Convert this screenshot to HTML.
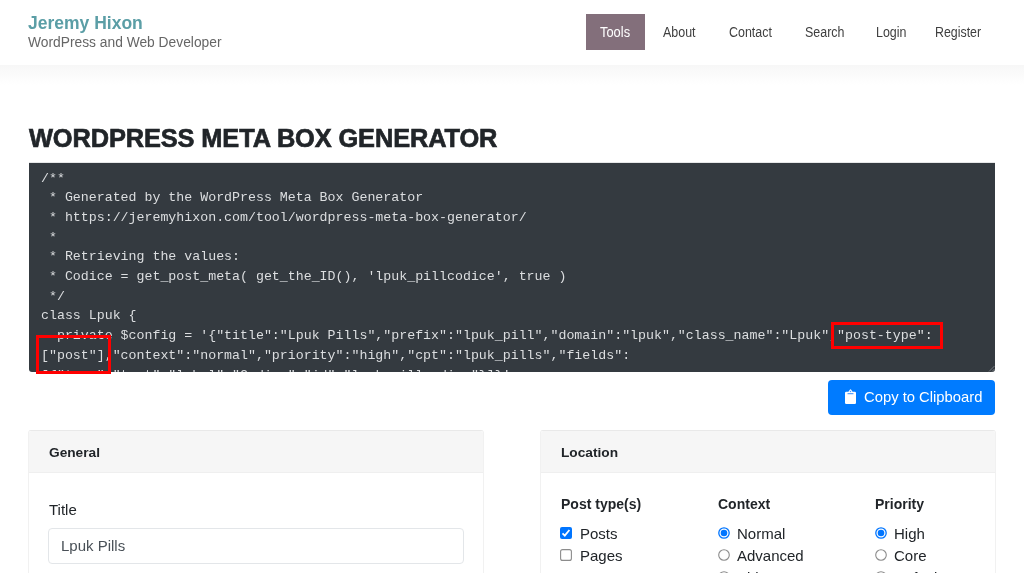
<!DOCTYPE html>
<html><head><meta charset="utf-8">
<style>
html,body{will-change:transform;margin:0;padding:0;background:#fff;width:1024px;height:573px;overflow:hidden;position:relative;font-family:"Liberation Sans",sans-serif;}
.a{position:absolute;white-space:nowrap;}
#hdr{left:0;top:0;width:1024px;height:65px;background:#fff;}
#shade{left:0;top:65px;width:1024px;height:20px;background:linear-gradient(#f7f7f7,#fff);}
#name{left:28px;top:12px;font-size:17.5px;font-weight:bold;color:#5b9ea6;line-height:22px;}
#tag{left:28px;top:34px;font-size:13.8px;color:#666;line-height:18px;}
#tools{left:586px;top:14px;width:59px;height:36px;background:#836f7b;}
.nav{font-size:14px;color:#3f3f3f;line-height:16px;top:24px;transform-origin:0 0;}
h1{position:absolute;margin:0;left:29px;top:120.5px;font-size:25.4px;-webkit-text-stroke:0.65px #212529;letter-spacing:-0.12px;font-weight:bold;color:#212529;line-height:34px;white-space:nowrap;}
#code{left:29px;top:162px;width:966px;height:209px;background:#343a40;border-top:1px solid #e6e7e8;border-radius:0 0 3px 3px;overflow:hidden;}
#code pre{margin:0;position:absolute;left:12px;top:5.5px;font-family:"Liberation Mono",monospace;font-size:13.27px;line-height:19.7px;color:#dcdee0;}
.red{position:absolute;border:3px solid #f00;box-sizing:border-box;}
#btn{left:828px;top:380px;width:167px;height:35px;background:#007bff;border-radius:4px;}
#btntxt{left:864px;top:389px;font-size:14.8px;color:#fff;line-height:17px;}
.card{position:absolute;top:430px;height:160px;border:1px solid #f1f1f1;border-top-color:#e9e9e9;border-radius:3px;background:#fff;box-sizing:border-box;}
.chdr{position:absolute;left:0;top:0;right:0;height:41px;background:#f6f6f6;border-bottom:1px solid #efefef;border-radius:3px 3px 0 0;}
.ctitle{font-size:13.7px;font-weight:bold;color:#212529;line-height:16px;}
.lbl{font-size:15px;color:#212529;line-height:18px;}
.bold{font-weight:bold;font-size:14px;}
#inp{left:48px;top:528px;width:416px;height:36px;box-sizing:border-box;border:1px solid #e3e6e9;border-radius:4px;background:#fff;}
.cb{position:absolute;width:11px;height:11px;box-sizing:border-box;border:1px solid #767676;border-radius:2px;background:#fff;}
.cb.on{background:#0075ff;border-color:#0075ff;}
.rd{position:absolute;width:11px;height:11px;box-sizing:border-box;border:1px solid #767676;border-radius:50%;background:#fff;}
.rd.on{border:2px solid #0075ff;}
.rd.on::after{content:"";position:absolute;left:1px;top:1px;width:5px;height:5px;border-radius:50%;background:#0075ff;}
</style></head><body>
<div class="a" id="hdr"></div>
<div class="a" id="shade"></div>
<div class="a" id="name">Jeremy Hixon</div>
<div class="a" id="tag">WordPress and Web Developer</div>
<div class="a" id="tools"></div>
<div class="a nav" style="left:600px;color:#fff;transform:scaleX(.92)">Tools</div>
<div class="a nav" style="left:663px;transform:scaleX(.89)">About</div>
<div class="a nav" style="left:729px;transform:scaleX(.89)">Contact</div>
<div class="a nav" style="left:805px;transform:scaleX(.89)">Search</div>
<div class="a nav" style="left:876px;transform:scaleX(.89)">Login</div>
<div class="a nav" style="left:935px;transform:scaleX(.885)">Register</div>

<h1>WORDPRESS META BOX GENERATOR</h1>

<div class="a" id="code"><pre>/**
 * Generated by the WordPress Meta Box Generator
 * https://jeremyhixon.com/tool/wordpress-meta-box-generator/
 *
 * Retrieving the values:
 * Codice = get_post_meta( get_the_ID(), 'lpuk_pillcodice', true )
 */
class Lpuk {
  private $config = '{"title":"Lpuk Pills","prefix":"lpuk_pill","domain":"lpuk","class_name":"Lpuk","post-type":
["post"],"context":"normal","priority":"high","cpt":"lpuk_pills","fields":
[{"type":"text","label":"Codice","id":"lpuk_pillcodice"}]}';</pre></div>
<svg class="a" style="left:988px;top:365px" width="7" height="7" viewBox="0 0 7 7"><path d="M6.5 1L1 6.5M6.5 4L4 6.5" stroke="#7d8288" stroke-width="0.9"/></svg>
<div class="red" style="left:831px;top:322px;width:112px;height:27px;"></div>
<div class="red" style="left:36px;top:335px;width:75px;height:39px;"></div>

<div class="a" id="btn"></div>
<svg class="a" style="left:845px;top:389px" width="11" height="15" viewBox="0 0 11 15"><rect x="0" y="2.8" width="11" height="12.2" rx="1.2" fill="#fff"/><path d="M3.2 3.2L4.6 0.9Q5.5 -0.2 6.4 0.9L7.8 3.2Z" fill="#fff"/><circle cx="5.5" cy="2.4" r="0.75" fill="#4d9bff"/><rect x="2.4" y="4" width="6.2" height="1.3" rx="0.65" fill="#5aa2ff"/></svg>
<div class="a" id="btntxt">Copy to Clipboard</div>

<div class="card" style="left:28px;width:456px;"><div class="chdr"></div></div>
<div class="card" style="left:540px;width:456px;"><div class="chdr"></div></div>
<div class="a ctitle" style="left:49px;top:445px;">General</div>
<div class="a ctitle" style="left:561px;top:445px;">Location</div>
<div class="a lbl" style="left:49px;top:501px;">Title</div>
<div class="a" id="inp"></div>
<div class="a lbl" style="left:61px;top:537px;color:#495057;">Lpuk Pills</div>

<div class="a lbl bold" style="left:561px;top:495px;">Post type(s)</div>
<div class="a lbl bold" style="left:718px;top:495px;">Context</div>
<div class="a lbl bold" style="left:875px;top:495px;">Priority</div>

<svg class="a" style="left:560px;top:527px" width="12" height="12" viewBox="0 0 12 12"><rect x="0" y="0" width="12" height="12" rx="2" fill="#0075ff"/><path d="M2.5 6.3L4.8 8.6L9.4 3" stroke="#fff" stroke-width="1.8" fill="none"/></svg>
<div class="a lbl" style="left:580px;top:525px;">Posts</div>
<svg class="a" style="left:560px;top:549px" width="12" height="12" viewBox="0 0 12 12"><rect x="0.6" y="0.6" width="10.8" height="10.8" rx="2" fill="#fff" stroke="#8c8c8c" stroke-width="1.1"/></svg>
<div class="a lbl" style="left:580px;top:547px;">Pages</div>

<svg class="a" style="left:718px;top:527px" width="12" height="12" viewBox="0 0 12 12"><circle cx="6" cy="6" r="5.2" fill="#fff" stroke="#0075ff" stroke-width="1.3"/><circle cx="6" cy="6" r="3.3" fill="#0075ff"/></svg>
<div class="a lbl" style="left:737px;top:525px;">Normal</div>
<svg class="a" style="left:718px;top:549px" width="12" height="12" viewBox="0 0 12 12"><circle cx="6" cy="6" r="5.3" fill="#fff" stroke="#8c8c8c" stroke-width="1.1"/></svg>
<div class="a lbl" style="left:737px;top:547px;">Advanced</div>
<svg class="a" style="left:718px;top:571px" width="12" height="12" viewBox="0 0 12 12"><circle cx="6" cy="6" r="5.3" fill="#fff" stroke="#8c8c8c" stroke-width="1.1"/></svg>
<div class="a lbl" style="left:737px;top:569px;">Side</div>

<svg class="a" style="left:875px;top:527px" width="12" height="12" viewBox="0 0 12 12"><circle cx="6" cy="6" r="5.2" fill="#fff" stroke="#0075ff" stroke-width="1.3"/><circle cx="6" cy="6" r="3.3" fill="#0075ff"/></svg>
<div class="a lbl" style="left:894px;top:525px;">High</div>
<svg class="a" style="left:875px;top:549px" width="12" height="12" viewBox="0 0 12 12"><circle cx="6" cy="6" r="5.3" fill="#fff" stroke="#8c8c8c" stroke-width="1.1"/></svg>
<div class="a lbl" style="left:894px;top:547px;">Core</div>
<svg class="a" style="left:875px;top:571px" width="12" height="12" viewBox="0 0 12 12"><circle cx="6" cy="6" r="5.3" fill="#fff" stroke="#8c8c8c" stroke-width="1.1"/></svg>
<div class="a lbl" style="left:894px;top:569px;">Default</div>
</body></html>
